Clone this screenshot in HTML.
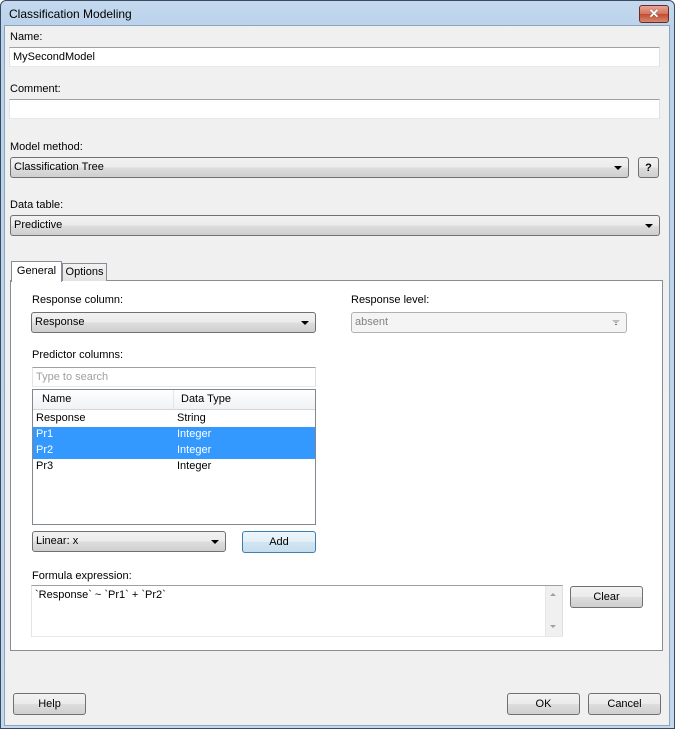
<!DOCTYPE html>
<html><head><style>
*{box-sizing:border-box;margin:0;padding:0}
body{width:675px;height:729px;background:#fff;font-family:"Liberation Sans",sans-serif;font-size:11px;color:#000;position:relative;overflow:hidden}
.a{position:absolute}
.frame{left:0;top:0;width:675px;height:729px;background:linear-gradient(#c4d9ee,#b9d1ea 30px,#c3d8ee);border:1px solid #3a4b5f;border-radius:6px 6px 0 0}
.client{left:4px;top:25px;width:666px;height:701px;background:#f0f0f0;border:1px solid #8ea4bd}
.lbl{position:absolute;white-space:nowrap}
.inp{position:absolute;background:#fff;border:1px solid #abadb3;border-top-color:#a0a0a0;border-left-color:#e2e3ea;border-right-color:#dbdfe6;border-bottom-color:#e3e9ef;padding:2px 3px;line-height:14px}
.combo{position:absolute;border:1px solid #707070;border-radius:3px;background:linear-gradient(#f2f2f2,#ebebeb 50%,#dddddd 51%,#cfcfcf);padding:2px 3px;line-height:15px}
.combo:after{content:"";position:absolute;right:6px;top:8px;border-left:4px solid transparent;border-right:4px solid transparent;border-top:4px solid #000}
.btn{position:absolute;border:1px solid #707070;border-radius:3px;background:linear-gradient(#f2f2f2,#ebebeb 50%,#dddddd 51%,#cfcfcf);text-align:center;line-height:20px}
</style></head><body>
<div class="a frame"></div>
<div class="lbl" style="left:9px;top:7px;font-size:12px">Classification Modeling</div>
<div class="a" style="left:639px;top:5px;width:30px;height:18px;border:1px solid #6b2b22;border-radius:3px;background:linear-gradient(#e8a493,#d2735d 50%,#c04d32 51%,#d7876f);color:#fff;font-weight:bold;text-align:center;line-height:16px;font-size:13px;text-shadow:0 0 1px #333">✕</div>
<div class="a client"></div>

<div class="lbl" style="left:10px;top:31px">Name:</div>
<div class="inp" style="left:9px;top:47px;width:651px;height:20px">MySecondModel</div>
<div class="lbl" style="left:10px;top:83px">Comment:</div>
<div class="inp" style="left:9px;top:99px;width:651px;height:20px"></div>

<div class="lbl" style="left:10px;top:141px">Model method:</div>
<div class="combo" style="left:10px;top:157px;width:619px;height:21px">Classification Tree</div>
<div class="btn" style="left:638px;top:157px;width:21px;height:21px;font-weight:bold">?</div>

<div class="lbl" style="left:10px;top:199px">Data table:</div>
<div class="combo" style="left:10px;top:215px;width:650px;height:21px">Predictive</div>

<div class="a" style="left:10px;top:280px;width:653px;height:371px;background:#fff;border:1px solid #898c95"></div>
<div class="a" style="left:62px;top:263px;width:45px;height:18px;border:1px solid #898c95;border-bottom:none;background:linear-gradient(#f2f2f2,#e3e3e3);text-align:center;line-height:17px">Options</div>
<div class="a" style="left:11px;top:261px;width:51px;height:21px;border:1px solid #898c95;border-bottom:none;background:#fff;text-align:center;line-height:18px">General</div>

<div class="lbl" style="left:32px;top:294px">Response column:</div>
<div class="combo" style="left:31px;top:312px;width:285px;height:21px">Response</div>
<div class="lbl" style="left:351px;top:294px">Response level:</div>
<div class="combo" style="left:351px;top:312px;width:276px;height:21px;background:#f4f4f4;border-color:#adb2b5;color:#838383">absent</div>
<div class="a" style="left:612px;top:320px;border-left:4px solid transparent;border-right:4px solid transparent;border-top:4px solid #bbb;background:#f4f4f4"></div>

<div class="lbl" style="left:32px;top:349px">Predictor columns:</div>
<div class="inp" style="left:32px;top:367px;width:284px;height:20px;color:#a0a0a0">Type to search</div>
<div class="a" style="left:32px;top:389px;width:284px;height:136px;background:#fff;border:1px solid #828790">
 <div class="a" style="left:0;top:0;width:282px;height:20px;background:linear-gradient(#fff,#f7f8fa 50%,#f1f2f4);border-bottom:1px solid #d5d5d5">
  <div class="lbl" style="left:9px;top:3px">Name</div>
  <div class="a" style="left:140px;top:0;width:1px;height:19px;background:#e3e5e8"></div>
  <div class="lbl" style="left:148px;top:3px">Data Type</div>
 </div>
 <div class="a" style="left:0;top:21px;width:282px;height:16px"><span class="lbl" style="left:3px;top:1px">Response</span><span class="lbl" style="left:144px;top:1px">String</span></div>
 <div class="a" style="left:0;top:37px;width:282px;height:32px;background:#3399ff;color:#fff"><span class="lbl" style="left:3px;top:1px">Pr1</span><span class="lbl" style="left:144px;top:1px">Integer</span><span class="lbl" style="left:3px;top:17px">Pr2</span><span class="lbl" style="left:144px;top:17px">Integer</span></div>
 <div class="a" style="left:0;top:69px;width:282px;height:16px"><span class="lbl" style="left:3px;top:1px">Pr3</span><span class="lbl" style="left:144px;top:1px">Integer</span></div>
</div>
<div class="combo" style="left:32px;top:531px;width:194px;height:21px">Linear: x</div>
<div class="btn" style="left:242px;top:531px;width:74px;height:22px;border-color:#3c7fb1;background:linear-gradient(#eef6fb,#e2eff7 50%,#d2e5f1 51%,#c6dded)">Add</div>

<div class="lbl" style="left:32px;top:570px">Formula expression:</div>
<div class="inp" style="left:31px;top:585px;width:532px;height:52px">`Response` ~ `Pr1` + `Pr2`</div>
<div class="a" style="left:545px;top:586px;width:17px;height:50px;background:#f0f0f0;border-left:1px solid #e6e6e6"></div>
<div class="a" style="left:550px;top:593px;border-left:3px solid transparent;border-right:3px solid transparent;border-bottom:3px solid #a0a0a0"></div>
<div class="a" style="left:550px;top:625px;border-left:3px solid transparent;border-right:3px solid transparent;border-top:3px solid #a0a0a0"></div>
<div class="btn" style="left:570px;top:586px;width:73px;height:22px">Clear</div>

<div class="btn" style="left:13px;top:693px;width:73px;height:22px">Help</div>
<div class="btn" style="left:507px;top:693px;width:73px;height:22px">OK</div>
<div class="btn" style="left:588px;top:693px;width:73px;height:22px">Cancel</div>
</body></html>
